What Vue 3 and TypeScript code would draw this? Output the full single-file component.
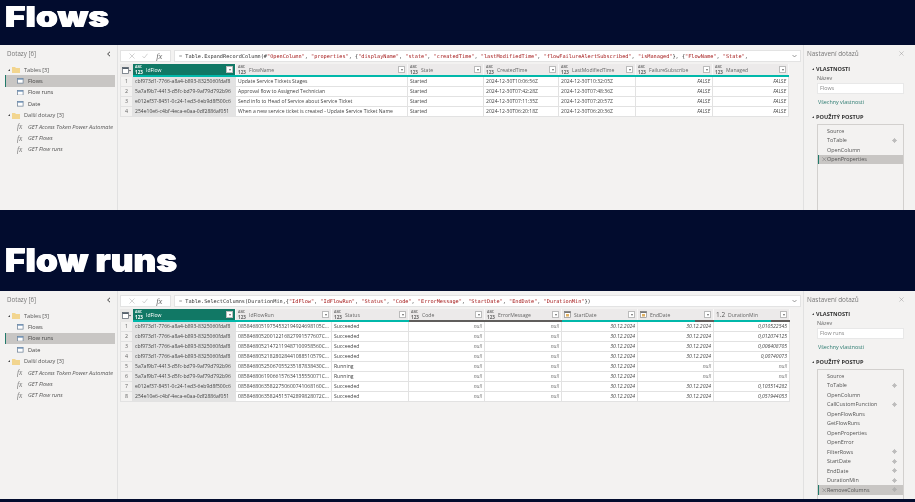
<script setup lang="ts">
interface Seg { color: string; flex: number }
interface Col { name: string; width: number; type: 'any' | 'date' | 'num'; right?: boolean; bar: Seg[]; selected?: boolean }
interface Step { name: string; gear?: boolean; active?: boolean }
interface QueryPanel {
  title: string; cls: string; formula: string; selected: string;
  cols: Col[]; rows: string[][]; steps: Step[];
}

const teal = '#01b8aa';
const dark = '#605e5c';
const t: Seg[] = [{ color: teal, flex: 1 }];
const id1 = 'cbf973d1-7766-a8a4-b893-8325060fdaf8';
const id2 = '5a7af9b7-4413-d5fc-bd79-9af79d792b96';
const id3 = 'e012ef37-8451-0c24-1ed3-6eb9d8f500c6';
const id4 = '254e10e6-c4bf-4eca-e0aa-0df2886af051';

const panels: QueryPanel[] = [
  {
    title: 'Flows', cls: 'first', selected: 'Flows',
    formula: '= Table.ExpandRecordColumn(#"OpenColumn", "properties", {"displayName", "state", "createdTime", "lastModifiedTime", "flowFailureAlertSubscribed", "isManaged"}, {"FlowName", "State",',
    cols: [
      { name: 'IdFlow', width: 103, type: 'any', bar: t, selected: true },
      { name: 'FlowName', width: 172, type: 'any', bar: t },
      { name: 'State', width: 76, type: 'any', bar: t },
      { name: 'CreatedTime', width: 75, type: 'any', bar: t },
      { name: 'LastModifiedTime', width: 77, type: 'any', bar: t },
      { name: 'FailureSubscribe', width: 77, type: 'any', right: true, bar: t },
      { name: 'Managed', width: 76, type: 'any', right: true, bar: t },
    ],
    rows: [
      [id1, 'Update Service Tickets Stages', 'Started', '2024-12-30T10:06:56Z', '2024-12-30T10:32:05Z', 'FALSE', 'FALSE'],
      [id2, 'Approval flow to Assigned Technician', 'Started', '2024-12-30T07:42:28Z', '2024-12-30T07:48:36Z', 'FALSE', 'FALSE'],
      [id3, 'Send info to Head of Service about Service Ticket', 'Started', '2024-12-30T07:11:35Z', '2024-12-30T07:20:57Z', 'FALSE', 'FALSE'],
      [id4, 'When a new service ticket is created - Update Service Ticket Name', 'Started', '2024-12-30T06:20:18Z', '2024-12-30T06:20:36Z', 'FALSE', 'FALSE'],
    ],
    steps: [
      { name: 'Source' }, { name: 'ToTable', gear: true }, { name: 'OpenColumn' },
      { name: 'OpenProperties', active: true },
    ],
  },
  {
    title: 'Flow runs', cls: 'second', selected: 'Flow runs',
    formula: '= Table.SelectColumns(DurationMin,{"IdFlow", "IdFlowRun", "Status", "Code", "ErrorMessage", "StartDate", "EndDate", "DurationMin"})',
    cols: [
      { name: 'IdFlow', width: 103, type: 'any', bar: t, selected: true },
      { name: 'IdFlowRun', width: 96, type: 'any', bar: t },
      { name: 'Status', width: 77, type: 'any', bar: t },
      { name: 'Code', width: 76, type: 'any', right: true, bar: [{ color: dark, flex: 1 }] },
      { name: 'ErrorMessage', width: 77, type: 'any', right: true, bar: [{ color: dark, flex: 1 }] },
      { name: 'StartDate', width: 76, type: 'date', right: true, bar: t },
      { name: 'EndDate', width: 76, type: 'date', right: true, bar: [{ color: teal, flex: 3 }, { color: dark, flex: 1 }] },
      { name: 'DurationMin', width: 76, type: 'num', right: true, bar: [{ color: teal, flex: 3 }, { color: dark, flex: 1 }] },
    ],
    rows: [
      [id1, '08584680519754532194924698105C...', 'Succeeded', 'null', 'null', '30.12.2024', '30.12.2024', '0,010522545'],
      [id1, '08584680520012216827991577607C...', 'Succeeded', 'null', 'null', '30.12.2024', '30.12.2024', '0,012074125'],
      [id1, '08584680521472119487100958560C...', 'Succeeded', 'null', 'null', '30.12.2024', '30.12.2024', '0,006408705'],
      [id1, '08584680521828028441088510579C...', 'Succeeded', 'null', 'null', '30.12.2024', '30.12.2024', '0,00740073'],
      [id2, '08584680525067055235187838430C...', 'Running', 'null', 'null', '30.12.2024', 'null', 'null'],
      [id2, '08584680619066157634135550071C...', 'Running', 'null', 'null', '30.12.2024', 'null', 'null'],
      [id3, '08584680635822750600741068160C...', 'Succeeded', 'null', 'null', '30.12.2024', '30.12.2024', '0,103514282'],
      [id4, '08584680635824515742899828072C...', 'Succeeded', 'null', 'null', '30.12.2024', '30.12.2024', '0,051944053'],
    ],
    steps: [
      { name: 'Source' }, { name: 'ToTable', gear: true }, { name: 'OpenColumn' },
      { name: 'CallCustomFunction', gear: true }, { name: 'OpenFlowRuns' }, { name: 'GetFlowRuns' },
      { name: 'OpenProperties' }, { name: 'OpenError' }, { name: 'FilterRows', gear: true },
      { name: 'StartDate', gear: true }, { name: 'EndDate', gear: true },
      { name: 'DurationMin', gear: true }, { name: 'RemoveColumns', gear: true, active: true },
    ],
  },
];

const tableItems = ['Flows', 'Flow runs', 'Date'];
const otherItems = ['GET Access Token Power Automate', 'GET Flows', 'GET Flow runs'];

function tokens(formula: string): { text: string; str: boolean }[] {
  return formula
    .split(/("[^"]*")/)
    .filter((part) => part.length > 0)
    .map((part) => ({ text: part, str: part.startsWith('"') }));
}
</script>

<template>
  <div class="page">
    <template v-for="p in panels" :key="p.title">
      <div class="title-wrap" :class="p.cls"><h1 class="title">{{ p.title }}</h1></div>
      <section class="panel" :class="p.cls">
        <aside class="queries">
          <div class="pane-head">
            <span>Dotazy [6]</span>
            <svg class="collapse" viewBox="0 0 6 6"><path d="M4 .8 1.6 3 4 5.2" fill="none" stroke="#444" stroke-width="1" /></svg>
          </div>
          <div class="group">
            <i class="tri"></i>
            <svg class="folder" viewBox="0 0 8 7"><path d="M0 1h3l1 1h4v5H0z" fill="#f2d58f" /></svg>
            <span>Tables [3]</span>
          </div>
          <div v-for="item in tableItems" :key="item" class="item" :class="{ on: item === p.selected }">
            <svg class="tbl" viewBox="0 0 7 6"><rect x=".4" y=".4" width="6.2" height="5.2" fill="#fff" stroke="#6b7f95" stroke-width=".8" /><rect x=".4" y=".4" width="6.2" height="1.4" fill="#6b8fb5" /></svg>
            <span>{{ item }}</span>
          </div>
          <div class="group">
            <i class="tri"></i>
            <svg class="folder" viewBox="0 0 8 7"><path d="M0 1h3l1 1h4v5H0z" fill="#f2d58f" /></svg>
            <span>Další dotazy [3]</span>
          </div>
          <div v-for="item in otherItems" :key="item" class="item fx">
            <span class="fx-mark">fx</span>
            <span>{{ item }}</span>
          </div>
        </aside>

        <main class="center">
          <div class="formula-row">
            <div class="formula-btns">
              <svg viewBox="0 0 6 6"><path d="M.5.5l5 5M5.500.5l-5 5" stroke="#b5b5b5" stroke-width=".6" /></svg>
              <svg viewBox="0 0 6 6"><path d="M.5 3.200 2.200 5 5.500.8" fill="none" stroke="#b5b5b5" stroke-width=".6" /></svg>
              <span class="fx-mark big">fx</span>
            </div>
            <div class="formula">
              <code><template v-for="(tk, i) in tokens(p.formula)" :key="i"><span :class="{ str: tk.str }">{{ tk.text }}</span></template></code>
              <svg class="chev" viewBox="0 0 6 4"><path d="M.6.8 3 3.200 5.400.8" fill="none" stroke="#555" stroke-width=".7" /></svg>
            </div>
          </div>

          <div class="grid">
            <div class="row head">
              <div class="num corner">
                <svg viewBox="0 0 9 7"><rect x=".4" y=".4" width="6" height="6" fill="#fff" stroke="#55606b" stroke-width=".7" /><rect x=".4" y=".4" width="6" height="1.600" fill="#55606b" /><path d="M7 3h2L8 4.500z" fill="#444" /></svg>
              </div>
              <div
                v-for="c in p.cols"
                :key="c.name"
                class="hcell"
                :class="{ sel: c.selected }"
                :style="{ width: c.width + 'px' }"
              >
                <span v-if="c.type === 'any'" class="type"><b>ABC</b><b>123</b></span>
                <svg v-else-if="c.type === 'date'" class="cal" viewBox="0 0 7 7"><rect x=".4" y=".4" width="6.200" height="6.200" fill="#fff" stroke="#777" stroke-width=".6" /><rect x=".4" y=".4" width="6.200" height="1.600" fill="#777" /><rect x="2" y="3" width="3" height="2.500" fill="#e0b060" /></svg>
                <span v-else class="type-num">1.2</span>
                <span class="hname">{{ c.name }}</span>
                <span class="filter"><i></i></span>
                <span class="bar">
                  <span
                    v-for="(s, si) in c.bar"
                    :key="si"
                    :style="{ background: s.color, flexGrow: s.flex }"
                  ></span>
                </span>
              </div>
            </div>
            <div v-for="(r, ri) in p.rows" :key="ri" class="row body">
              <div class="num">{{ ri + 1 }}</div>
              <div
                v-for="(c, ci) in p.cols"
                :key="c.name"
                class="cell"
                :class="{ sel: c.selected, right: c.right, nul: r[ci] === 'null' }"
                :style="{ width: c.width + 'px' }"
              >{{ r[ci] }}</div>
            </div>
          </div>
        </main>

        <aside class="settings">
          <div class="pane-head settings-head">
            <span>Nastavení dotazů</span>
            <svg viewBox="0 0 6 6"><path d="M.5.5l5 5M5.500.5l-5 5" stroke="#888" stroke-width=".5" /></svg>
          </div>
          <div class="sec"><i class="tri"></i>VLASTNOSTI</div>
          <div class="label">Název</div>
          <div class="input">{{ p.title }}</div>
          <div class="link">Všechny vlastnosti</div>
          <div class="sec second-sec"><i class="tri"></i>POUŽITÝ POSTUP</div>
          <div class="steps">
            <div v-for="s in p.steps" :key="s.name" class="step" :class="{ active: s.active }">
              <svg v-if="s.active" class="del" viewBox="0 0 6 6"><path d="M.5.500l5 5M5.500.5l-5 5" stroke="#777" stroke-width=".7" /></svg>
              <span>{{ s.name }}</span>
              <svg v-if="s.gear" class="gear" viewBox="0 0 6 6"><circle cx="3" cy="3" r="1.700" fill="none" stroke="#a8a8a8" stroke-width="1" /><path d="M3 0v6M0 3h6" stroke="#a8a8a8" stroke-width=".6" /></svg>
            </div>
          </div>
        </aside>
      </section>
    </template>
  </div>
</template>

<style>
html, body { background: #020c2e; }
</style>

<style scoped>
.page {
  width: 915px;
  height: 502px;
  overflow: hidden;
  background: #020c2e;
  font-family: "Open Sans", "Noto Sans", sans-serif;
  color: #444;
}
.title-wrap { box-sizing: border-box; padding-left: 5px; }
.title-wrap.first { height: 45px; }
.title-wrap.second { height: 81px; padding-top: 35px; }
.title {
  margin: 0;
  font-family: Inter, "Noto Sans", sans-serif;
  font-weight: 900;
  font-size: 33px;
  letter-spacing: 0.1px;
  text-shadow: 0.5px 0 0 #fff, -0.5px 0 0 #fff;
  color: #fff;
  line-height: 30px;
  white-space: nowrap;
  transform: scaleX(1.06);
  transform-origin: 0 27px;
}
.title-wrap.first .title { transform: scale(1.06, 0.86); }
.panel {
  display: flex;
  background: #f3f2f1;
  overflow: hidden;
  filter: blur(0.4px);
}
.panel.first { height: 165px; }
.panel.second { height: 208px; }
.queries {
  width: 117px;
  flex: none;
  border-right: 1px solid #e1e1e1;
  font-size: 5.600px;
  padding-top: 4px;
}
.pane-head {
  display: flex;
  justify-content: space-between;
  align-items: center;
  height: 9px;
  padding: 0 5px 0 7px;
  font-size: 6.200px;
  color: #777;
  margin-bottom: 6px;
}
.collapse { width: 6px; height: 6px; }
.group {
  display: flex;
  align-items: center;
  height: 11.400px;
  padding-left: 8px;
  color: #555;
}
.tri {
  display: inline-block;
  width: 0;
  height: 0;
  border-left: 2px solid transparent;
  border-bottom: 2px solid #444;
  margin-right: 2px;
}
.folder { width: 8px; height: 7px; margin-right: 4px; }
.item {
  display: flex;
  align-items: center;
  height: 11.400px;
  width: 110px;
  margin-left: 5px;
  padding-left: 12px;
  box-sizing: border-box;
  color: #444;
}
.item.on { background: #c8c6c4; border-left: 1px solid #217a6a; padding-left: 11px; }
.tbl { width: 6.500px; height: 5.500px; margin-right: 4.500px; flex: none; }
.item.fx { font-style: italic; white-space: nowrap; color: #555; }
.fx-mark {
  font-family: "Liberation Serif", serif;
  font-style: italic;
  font-size: 7.500px;
  color: #777;
  width: 7px;
  margin-right: 4px;
  flex: none;
}
.center { flex: 1; padding: 5px 0 0 2px; min-width: 0; }
.panel.second .center { padding-top: 4px; }
.formula-row { display: flex; gap: 3px; height: 12px; margin: 0 2px 2px 0; }
.formula-btns {
  width: 51px;
  flex: none;
  background: #fff;
  border: 1px solid #e3e3e3;
  box-sizing: border-box;
  display: flex;
  align-items: center;
  justify-content: space-around;
  padding: 0 3px 0 4px;
}
.formula-btns svg { width: 6px; height: 6px; }
.formula-btns .big { font-size: 8.500px; margin: 0; color: #666; }
.formula {
  flex: 1;
  background: #fff;
  border: 1px solid #e3e3e3;
  box-sizing: border-box;
  display: flex;
  align-items: center;
  justify-content: space-between;
  padding: 0 3px 0 4px;
  min-width: 0;
}
.formula code {
  font-family: "DejaVu Sans Mono", "Liberation Mono", monospace;
  font-size: 5.230px;
  white-space: pre;
  color: #333;
  overflow: hidden;
}
.formula .str { color: #a31515; }
.chev { width: 5px; height: 4px; flex: none; }
.grid { display: flex; flex-direction: column; }
.row { display: flex; }
.row.head { height: 13px; }
.row.body { height: 10px; }
.num {
  width: 13px;
  flex: none;
  box-sizing: border-box;
  border: 1px solid #e2e2e2;
  border-top: 0;
  background: #f3f2f1;
  font-size: 5.300px;
  line-height: 9px;
  text-align: center;
  color: #666;
}
.corner {
  height: 13px;
  border: 0;
  background: #e9e8e7;
  display: flex;
  align-items: center;
  justify-content: center;
}
.corner svg { width: 9px; height: 7px; }
.hcell {
  flex: none;
  box-sizing: border-box;
  height: 13px;
  position: relative;
  display: flex;
  align-items: flex-start;
  gap: 3px;
  padding: 1px 2px 0 2px;
  background: #eceaea;
  border-right: 1px solid #f8f8f8;
  font-size: 5.100px;
  color: #666;
}
.hcell.sel { background: #117865; color: #fff; }
.hname { line-height: 10px; flex: 1; white-space: nowrap; overflow: hidden; }
.type { display: flex; flex-direction: column; width: 8px; flex: none; font-size: 3.700px; line-height: 4.500px; }
.type b { font-weight: 600; }
.type b + b { font-size: 4.600px; font-weight: 700; }
.type-num { width: 9px; font-size: 6.500px; line-height: 10px; flex: none; color: #555; }
.cal { width: 7px; height: 7px; flex: none; margin-top: 1px; }
.filter {
  position: relative;
  width: 7px;
  height: 7px;
  flex: none;
  margin-top: 1px;
  box-sizing: border-box;
  background: #fff;
  border: 1px solid #bbb;
  display: flex;
  align-items: center;
  justify-content: center;
}
.filter i {
  width: 0;
  height: 0;
  border-left: 1.500px solid transparent;
  border-right: 1.500px solid transparent;
  border-top: 2px solid #666;
}
.bar {
  position: absolute;
  left: 0;
  right: -1px;
  bottom: 0;
  height: 2px;
  display: flex;
}
.bar span { display: block; flex-basis: 0; }
.cell {
  flex: none;
  box-sizing: border-box;
  padding: 0 2px;
  background: #fff;
  border-right: 1px solid #e2e2e2;
  border-bottom: 1px solid #e2e2e2;
  font-size: 5.050px;
  line-height: 9px;
  white-space: nowrap;
  overflow: hidden;
  color: #444;
}
.cell.sel { background: #e3e3e3; }
.cell.right { text-align: right; font-style: italic; }
.cell.nul { font-style: italic; color: #777; }
.settings {
  width: 112px;
  flex: none;
  box-sizing: border-box;
  border-left: 1px solid #e1e1e1;
  padding-top: 4px;
  font-size: 5.400px;
}
.settings-head { padding: 0 11px 0 3px; margin-bottom: 7px; font-size: 6.400px; }
.panel.second .settings-head { margin-bottom: 6px; }
.settings-head svg { width: 5px; height: 5px; }
.sec {
  height: 9px;
  line-height: 9px;
  padding-left: 8px;
  font-weight: 700;
  font-size: 5.600px;
  color: #333;
}
.sec .tri { vertical-align: 1px; }
.label { padding-left: 13px; line-height: 9px; height: 9px; color: #666; }
.input {
  margin: 0 11px 0 13px;
  height: 11px;
  line-height: 9px;
  box-sizing: border-box;
  background: #fff;
  border: 1px solid #e8e8e8;
  padding-left: 2px;
  color: #888;
}
.link { padding-left: 14px; margin-top: 4px; line-height: 9px; color: #2b7a70; }
.second-sec { margin-top: 6px; }
.steps {
  margin: 2px 11px 0 13px;
  border: 1px solid #d2d0ce;
  background: #f3f2f1;
  padding-top: 1px;
  min-height: 160px;
  box-sizing: border-box;
}
.step {
  display: flex;
  align-items: center;
  height: 9.500px;
  padding: 0 6px 0 9px;
  color: #555;
  position: relative;
}
.step span { flex: 1; white-space: nowrap; }
.step.active { background: #c8c6c4; border-left: 1px solid #217a6a; padding-left: 8px; }
.del { position: absolute; left: 3px; top: 2.500px; width: 4.500px; height: 4.500px; }
.gear { width: 5px; height: 5px; flex: none; }
</style>
